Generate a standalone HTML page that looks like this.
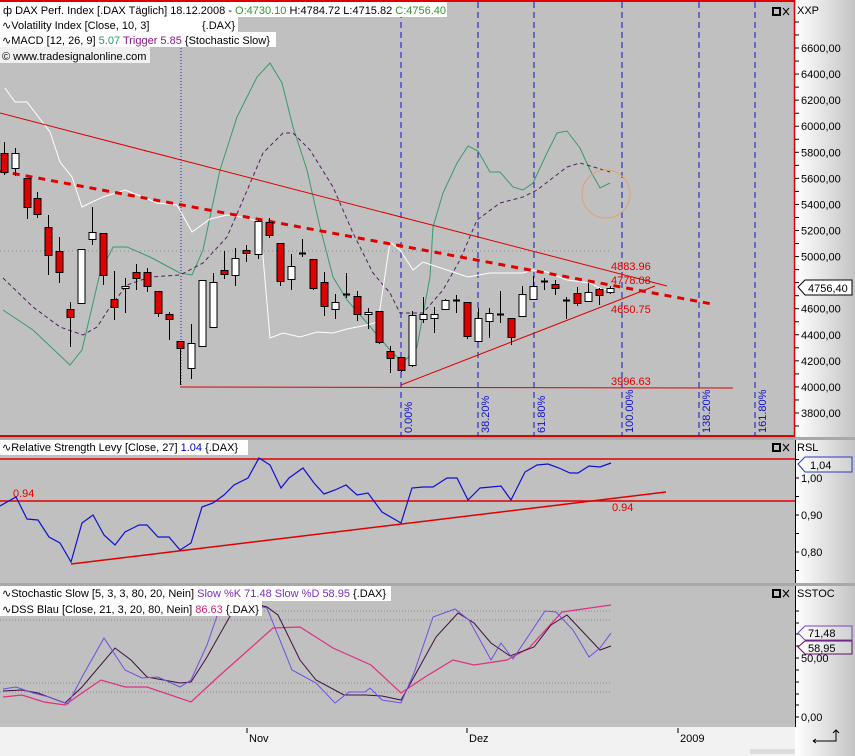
<!DOCTYPE html>
<html><head><meta charset="utf-8"><style>
body{margin:0;width:855px;height:756px;overflow:hidden;background:#c0c0c0;font-family:"Liberation Sans",sans-serif;}
svg{display:block}
text{font-family:"Liberation Sans",sans-serif;font-size:11px}
</style></head><body>
<svg id="s" width="855" height="756" xmlns="http://www.w3.org/2000/svg">
<defs>
<linearGradient id="ax" x1="0" x2="1"><stop offset="0" stop-color="#ffffff"/><stop offset="1" stop-color="#c4c4c4"/></linearGradient>
<linearGradient id="bx" x1="0" x2="1"><stop offset="0" stop-color="#ffffff"/><stop offset="1" stop-color="#d0d0d0"/></linearGradient>
</defs>
<rect x="0" y="0" width="855" height="756" fill="#c0c0c0"/>
<rect x="795" y="0" width="60" height="727" fill="url(#ax)"/>
<rect x="0" y="727" width="855" height="29" fill="#f2f2f2"/>
<rect x="795" y="727" width="60" height="29" fill="url(#ax)"/>
<!-- panel separators -->
<rect x="0" y="437" width="855" height="3" fill="#a8a8a8"/>
<rect x="0" y="583" width="855" height="3" fill="#a8a8a8"/>
<line x1="0" y1="1" x2="795" y2="1" stroke="#e00000" stroke-width="2"/>
<line x1="0" y1="436" x2="795" y2="436" stroke="#e00000" stroke-width="2"/>
<line x1="794.5" y1="0" x2="794.5" y2="437" stroke="#e00000" stroke-width="1.5"/>
<line x1="795.5" y1="440" x2="795.5" y2="583" stroke="#000" stroke-width="1"/>
<line x1="795.5" y1="586" x2="795.5" y2="727" stroke="#000" stroke-width="1"/>
<g id="main"></g>
<!-- headers -->
<rect x="0" y="2" width="447" height="15" fill="#fff"/>
<rect x="0" y="17" width="238" height="15" fill="#fff"/>
<rect x="0" y="32" width="276" height="15" fill="#fff"/>
<rect x="0" y="47" width="150" height="16" fill="#f0f0f0"/>
<text x="3" y="14">ф DAX Perf. Index [.DAX  Täglich] 18.12.2008 - <tspan fill="#2a9a2a">O:4730.10</tspan> H:4784.72 L:4715.82 <tspan fill="#2a9a2a">C:4756.40</tspan></text>
<text x="2" y="29">∿Volatility Index [Close, 10, 3]</text><text x="202" y="29">{.DAX}</text>
<text x="2" y="44">∿MACD [12, 26, 9] <tspan fill="#2a9a6a">5.07</tspan> <tspan fill="#8a1a8a">Trigger 5.85</tspan> {Stochastic Slow}</text>
<text x="2" y="60">© www.tradesignalonline.com</text>
<rect x="0" y="440" width="248" height="15" fill="#fff"/>
<text x="2" y="451">∿Relative Strength Levy [Close, 27] <tspan fill="#0000c0">1.04</tspan> {.DAX}</text>
<rect x="0" y="586" width="391" height="15" fill="#fff"/>
<rect x="0" y="601" width="262" height="15" fill="#fff"/>
<text x="2" y="597">∿Stochastic Slow [5, 3, 3, 80, 20, Nein] <tspan fill="#7a30c0">Slow %K 71.48 Slow %D 58.95</tspan> {.DAX}</text>
<text x="2" y="613">∿DSS Blau [Close, 21, 3, 20, 80, Nein] <tspan fill="#d02070">86.63</tspan> {.DAX}</text>
<!-- window icons -->
<g id="icons"></g>
<text x="797" y="14">XXP</text>
<text x="797" y="451">RSL</text>
<text x="797" y="597">SSTOC</text>
<g id="axis"></g>
<!-- right value boxes -->
<path d="M798 287 L805 280 L852 280 L852 295 L805 295 Z" fill="#fff" stroke="#000"/>
<text x="808" y="292">4756,40</text>
<path d="M798 464 L805 457 L852 457 L852 472 L805 472 Z" fill="url(#bx)" stroke="#2040c0"/>
<text x="810" y="469">1,04</text>
<path d="M798 633 L805 626 L852 626 L852 640 L805 640 Z" fill="url(#bx)" stroke="#8040c0"/>
<text x="808" y="637">71,48</text>
<path d="M798 647 L805 641 L852 641 L852 654 L805 654 Z" fill="url(#bx)" stroke="#601060"/>
<text x="808" y="652">58,95</text>
<!-- time axis -->
<g stroke="#000"><line x1="247" y1="728" x2="247" y2="733"/><line x1="467" y1="728" x2="467" y2="733"/><line x1="678" y1="728" x2="678" y2="733"/></g>
<text x="249" y="742">Nov</text><text x="469" y="742">Dez</text><text x="680" y="742">2009</text>
<rect x="750" y="749" width="45" height="5" fill="#ddd"/>
<path d="M813 741 L836 741 L836 730 M833 733 L836 730 L839 733 M813 741 l3 -2 M813 741 l3 2" stroke="#000" fill="none"/>
</svg>
<script>
var NS="http://www.w3.org/2000/svg",m=document.getElementById("main");
function el(t,a,p){var e=document.createElementNS(NS,t);for(var k in a)e.setAttribute(k,a[k]);(p||m).appendChild(e);return e;}
function pl(pts,st,w,da){el("polyline",{points:pts.map(function(p){return p.join(",")}).join(" "),fill:"none",stroke:st,"stroke-width":w||1,"stroke-dasharray":da||"none"});}
// dotted grids
el("line",{x1:0,y1:251,x2:610,y2:251,stroke:"#888","stroke-dasharray":"1,3"});
[611,620,683,692].forEach(function(y){el("line",{x1:0,y1:y,x2:610,y2:y,stroke:"#888","stroke-dasharray":"1,2"});});
el("line",{x1:181,y1:45,x2:181,y2:387,stroke:"#2020c0","stroke-dasharray":"1,2"});
// fib lines
var fib=[[401,"0.00%"],[478,"38.20%"],[534,"61.80%"],[622,"100.00%"],[699,"138.20%"],[755,"161.80%"]];
fib.forEach(function(f){el("line",{x1:f[0],y1:2,x2:f[0],y2:436,stroke:"#1010d0","stroke-dasharray":"6,4"});
var t=el("text",{x:0,y:0,fill:"#1010d0",transform:"translate("+(f[0]+11)+",433) rotate(-90)"});t.textContent=f[1];});
// horizontal support
el("line",{x1:180,y1:387,x2:733,y2:388,stroke:"#e00000"});
// MACD lines
pl([[3,310],[33,330],[70,365],[82,350],[100,273],[113,247],[127,247],[150,257],[180,273],[192,275],[203,250],[220,170],[237,117],[257,77],[270,63],[282,83],[293,127],[307,170],[320,227],[333,277],[347,300],[367,323],[390,350],[403,363],[417,347],[430,277],[433,227],[443,193],[457,163],[468,146],[478,151],[490,172],[500,172],[513,187],[523,190],[533,183],[547,153],[557,133],[567,131],[580,148],[590,170],[600,188],[610,183]],"#3a9a6a",1);
pl([[3,278],[33,307],[60,327],[83,335],[97,327],[110,307],[127,285],[150,277],[180,275],[203,263],[227,237],[243,200],[263,153],[283,133],[293,133],[310,150],[333,187],[353,233],[373,273],[390,293],[400,313],[423,313],[443,290],[460,260],[477,220],[500,203],[523,197],[537,190],[550,180],[567,167],[580,163],[597,168],[610,172]],"#502060",1,"4,3");
// white volatility
pl([[5,88],[15,102],[27,102],[50,132],[60,162],[72,177],[82,207],[90,203],[103,197],[125,190],[143,197],[157,203],[177,205],[192,232],[210,219],[227,215],[247,218],[260,222],[270,338],[283,333],[300,337],[317,332],[333,333],[347,329],[367,325],[378,322],[390,242],[400,250],[413,270],[423,262],[468,277],[490,273],[523,273],[533,270],[547,272],[567,280],[590,283],[603,290],[612,288]],"#fff",1);
el("circle",{cx:606,cy:194,r:24,fill:"none",stroke:"#e0a070","stroke-width":1});
// trendlines
el("line",{x1:0,y1:113,x2:667,y2:286,stroke:"#e00000"});
el("line",{x1:0,y1:171,x2:712,y2:304,stroke:"#e00000","stroke-width":3,"stroke-dasharray":"7,6"});
el("line",{x1:401,y1:385,x2:655,y2:286,stroke:"#e00000"});
// candles [x,wt,wb,bt,bb,red]
var C=[[4,142,175,153,172,1],[15,148,176,153,168,0],[27,178,219,178,207,1],[37,192,218,198,214,1],[48,215,275,227,255,1],[59,237,283,251,272,1],[70,302,347,309,317,1],[81,249,303,249,303,0],[92,207,245,232,239,0],[103,233,285,233,275,1],[114,271,320,299,307,1],[125,278,313,286,288,0],[136,264,290,272,278,1],[147,268,292,272,286,1],[158,291,317,291,313,1],[169,312,340,314,319,1],[180,341,385,341,348,1],[191,324,379,343,368,0],[202,280,346,280,346,0],[213,273,327,282,327,0],[224,251,279,270,274,1],[235,248,286,258,275,0],[246,245,262,250,253,1],[258,219,259,221,254,0],[269,218,238,222,235,1],[280,243,286,243,281,1],[291,254,290,266,279,0],[302,239,257,253,253,2],[313,259,290,259,288,1],[324,272,316,282,306,1],[335,294,319,302,309,0],[346,273,298,294,294,2],[357,291,321,296,314,1],[368,308,329,312,314,0],[379,311,344,311,342,1],[390,346,373,351,358,1],[401,357,372,357,370,1],[412,311,367,315,365,0],[423,297,323,314,319,0],[434,307,333,314,318,0],[445,299,309,300,309,0],[456,295,313,300,300,2],[467,302,339,302,336,1],[478,308,341,318,341,0],[489,308,338,313,321,0],[500,291,323,314,314,2],[511,318,345,318,337,1],[522,286,316,294,316,0],[533,276,299,286,299,0],[544,278,290,281,281,2],[555,280,295,284,288,1],[566,297,319,300,300,2],[577,287,306,293,303,1],[588,283,301,292,301,0],[599,288,305,289,295,1],[610,286,294,288,292,0]];
C.forEach(function(c){el("line",{x1:c[0]+.5,y1:c[1],x2:c[0]+.5,y2:c[2],stroke:"#000"});
if(c[5]==2){el("line",{x1:c[0]-3,y1:c[3]+.5,x2:c[0]+4,y2:c[3]+.5,stroke:"#000","stroke-width":2});}
else el("rect",{x:c[0]-3,y:c[3]+.5,width:7,height:Math.max(2,c[4]-c[3]),fill:c[5]?"#e00000":"#fff",stroke:"#000"});});
// labels
[[611,270,"4883.96"],[611,284,"4778.08"],[611,313,"4650.75"],[611,385,"3996.63"]].forEach(function(l){var t=el("text",{x:l[0],y:l[1],fill:"#e00000"});t.textContent=l[2];});
// RSL panel
el("line",{x1:0,y1:459,x2:795,y2:459,stroke:"#e00000","stroke-width":1.5});
el("line",{x1:0,y1:501,x2:795,y2:501,stroke:"#e00000","stroke-width":1.5});
el("line",{x1:71,y1:564,x2:666,y2:492,stroke:"#e00000","stroke-width":1.5});
var t=el("text",{x:13,y:497,fill:"#e00000"});t.textContent="0.94";
t=el("text",{x:612,y:511,fill:"#e00000"});t.textContent="0.94";
pl([[0,506],[16,497],[27,519],[38,520],[49,537],[60,543],[71,562],[82,523],[93,515],[104,535],[115,545],[125,532],[139,525],[147,525],[158,537],[169,537],[180,550],[191,543],[202,507],[213,503],[224,495],[234,485],[248,478],[259,458],[270,465],[281,488],[289,478],[303,468],[314,483],[324,494],[335,490],[346,485],[357,495],[368,493],[382,512],[401,523],[412,488],[423,487],[433,487],[447,478],[457,478],[468,500],[480,488],[491,487],[501,486],[511,500],[525,472],[537,465],[548,464],[559,468],[570,473],[578,473],[589,466],[600,467],[611,463]],"#1010d0",1.2);
// Stoch
pl([[3,697],[22,695],[44,702],[65,705],[82,693],[101,680],[125,687],[147,687],[191,702],[218,677],[245,653],[273,628],[300,627],[333,648],[371,665],[401,693],[425,677],[453,660],[474,665],[507,660],[529,648],[562,612],[611,605]],"#e03080",1.2);
pl([[3,691],[22,690],[38,693],[65,703],[82,687],[115,648],[131,660],[147,677],[180,683],[191,682],[207,657],[229,618],[240,600],[267,607],[278,615],[300,660],[316,680],[344,695],[365,695],[382,696],[401,700],[414,677],[436,637],[458,613],[474,623],[491,643],[510,656],[534,647],[551,625],[567,615],[583,632],[600,650],[611,646]],"#401040",1);
pl([[3,689],[16,687],[33,693],[49,697],[68,704],[82,677],[104,638],[125,670],[142,678],[158,677],[180,687],[191,680],[207,645],[218,613],[225,598],[267,608],[292,670],[316,683],[335,703],[349,692],[365,692],[370,688],[382,700],[401,703],[414,673],[433,617],[455,609],[469,620],[491,660],[501,643],[513,659],[545,611],[556,612],[573,630],[589,657],[600,648],[611,633]],"#7050e0",1);
// axis
var ax=document.getElementById("axis");
function tick(y,lab,major){el("line",{x1:795,y1:y,x2:799,y2:y,stroke:"#000"},ax);if(lab){var q=el("text",{x:801,y:y+4},ax);q.textContent=lab;}}
var pr=[6600,6400,6200,6000,5800,5600,5400,5200,5000,4800,4600,4400,4200,4000,3800];
for(var i=0;i<pr.length;i++){var y=48+i*26.07;tick(y,pr[i]==4800?"":pr[i]+",00");tick(y-13,"");}
tick(22,"");tick(426,"");
[[478,"1,00"],[515,"0,90"],[552,"0,80"]].forEach(function(a){tick(a[0],a[1]);tick(a[0]+18.5,"");tick(a[0]-18.5,"");});
[[658,"50,00"],[717,"0,00"]].forEach(function(a){tick(a[0],a[1]);});
[611,623,634,646,670,682,694,705].forEach(function(y){tick(y,"");});
// icons
var ic=document.getElementById("icons");
[[773,8],[773,444],[773,590]].forEach(function(p){el("rect",{x:p[0],y:p[1],width:7,height:7,fill:"none",stroke:"#000","stroke-width":2},ic);
el("path",{d:"M"+(p[0]+10)+" "+p[1]+" l6 7 M"+(p[0]+16)+" "+p[1]+" l-6 7",stroke:"#000",fill:"none"},ic);});
</script>
</body></html>
